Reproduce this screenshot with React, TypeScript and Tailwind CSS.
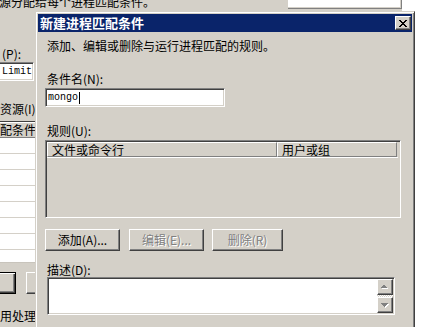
import React from "react";

const sunken =
  "border border-t-[#808080] border-l-[#808080] border-r-white border-b-white shadow-[inset_1px_1px_0_#404040,inset_-1px_-1px_0_#d4d0c8]";
const raised =
  "border border-t-white border-l-white border-r-[#404040] border-b-[#404040] shadow-[inset_-1px_-1px_0_#808080]";
const disabledText = "text-[#808080] [text-shadow:1px_1px_0_#ffffff]";

function Arrow({ up }: { up?: boolean }) {
  return (
    <svg width="8" height="5" viewBox="0 0 8 5" shapeRendering="crispEdges">
      {up ? (
        <>
          <path d="M4 1h1v1h1v1h1v1H1V3h1V2h1V1z" fill="#ffffff" />
          <path d="M3 0h1v1h1v1h1v1H0V2h1V1h1V0z" fill="#808080" />
        </>
      ) : (
        <>
          <path d="M1 1h7v1h-1v1h-1v1h-1v1H4V4H3V3H2V2H1z" fill="#ffffff" />
          <path d="M0 0h7v1H6v1H5v1H4v1H3V3H2V2H1V1H0z" fill="#808080" />
        </>
      )}
    </svg>
  );
}

function BackgroundWindow() {
  return (
    <div className="absolute left-0 top-0 w-[402px] h-[327px] bg-[#d4d0c8] flex flex-col overflow-hidden">
      <div className="flex items-start mt-[-5px] h-[14px] shrink-0">
        <span className="ml-[-13px] whitespace-nowrap">资源分配给每个进程匹配条件。</span>
        <div className="ml-auto w-[114px] h-[14px] bg-white border-r border-b border-[#808080] shadow-[inset_-1px_-1px_0_#d4d0c8]" />
      </div>
      <div className="mt-[38px] ml-[2px] h-[14px] shrink-0 whitespace-nowrap">(P):</div>
      <div
        className={`mt-[1px] ml-[-4px] w-[38px] h-[19px] shrink-0 bg-white ${sunken} p-[1px] pl-[5px] flex items-center font-['Liberation_Mono',monospace] text-[10px]`}
      >
        Limit
      </div>
      <div className="mt-[21px] h-[14px] shrink-0 whitespace-nowrap">资源(I)</div>
      <div className="mt-[5px] ml-[-20px] w-[55px] h-[142px] shrink-0 bg-white border-t border-t-[#404040] border-b border-b-[#c8c4bc] flex flex-col overflow-hidden">
        <div className="h-[16px] shrink-0 bg-[#d4d0c8] border-b border-b-[#808080] shadow-[inset_0_1px_0_#ffffff] flex items-center pl-[8px] whitespace-nowrap">
          匹配条件
        </div>
        {Array.from({ length: 8 }).map((_, i) => (
          <div key={i} className="h-[16px] shrink-0 border-b border-b-[#d4d0c8]" />
        ))}
      </div>
      <div className="mt-[9px] h-[22px] shrink-0 flex">
        <div className="ml-[-40px] w-[56px] h-[22px] border border-black shadow-[inset_1px_1px_0_#ffffff,inset_-1px_-1px_0_#404040,inset_-2px_-2px_0_#808080]" />
        <div className={`ml-[10px] w-[75px] h-[22px] ${raised}`} />
      </div>
      <div className="mt-[15px] h-[14px] shrink-0 whitespace-nowrap">用处理</div>
    </div>
  );
}

function Dialog() {
  return (
    <div className="absolute left-[35px] top-[11px] w-[380px] h-[330px] bg-[#d4d0c8] border border-t-[#d4d0c8] border-l-[#d4d0c8] border-r-[#404040] border-b-[#404040] shadow-[inset_1px_1px_0_#ffffff,inset_-1px_-1px_0_#808080] p-[2px] flex flex-col">
      <div className="h-[18px] shrink-0 bg-[#0a246a] flex items-center pl-[2px] pr-[1px]">
        <span className="text-white font-bold text-[13px] leading-[14px] whitespace-nowrap">新建进程匹配条件</span>
        <div className={`ml-auto w-[16px] h-[14px] bg-[#d4d0c8] ${raised} flex items-center justify-center`}>
          <svg width="8" height="7" viewBox="0 0 8 7" shapeRendering="crispEdges">
            <path
              d="M0 0h2v1H0z M6 0h2v1H6z M1 1h2v1H1z M5 1h2v1H5z M2 2h4v1H2z M3 3h2v1H3z M2 4h4v1H2z M1 5h2v1H1z M5 5h2v1H5z M0 6h2v1H0z M6 6h2v1H6z"
              fill="#000000"
            />
          </svg>
        </div>
      </div>

      <div className="flex flex-col pl-[7px]">
        <div className="mt-[7px] ml-[2px] h-[14px] whitespace-nowrap">添加、编辑或删除与运行进程匹配的规则。</div>

        <div className="mt-[19px] ml-[2px] h-[14px] whitespace-nowrap">条件名(N):</div>
        <div
          className={`mt-[2px] w-[180px] h-[19px] bg-white ${sunken} pl-[2px] py-[1px] pr-[1px] flex items-center font-['Liberation_Mono',monospace] text-[10px] leading-[12px]`}
        >
          <span>mongo</span>
          <span className="ml-[1px] w-[1px] h-[12px] bg-black" />
        </div>

        <div className="mt-[17px] ml-[2px] h-[14px] whitespace-nowrap">规则(U):</div>
        <div className={`mt-[2px] w-[356px] h-[78px] bg-[#d4d0c8] ${sunken} p-[1px] flex flex-col`}>
          <div className="flex h-[15px] shrink-0">
            <div className="w-[230px] h-[15px] border-t border-t-white border-l border-l-white border-r border-r-[#808080] border-b border-b-[#808080] flex items-center pl-[4px] whitespace-nowrap">
              文件或命令行
            </div>
            <div className="w-[120px] h-[15px] border-t border-t-white border-l border-l-white border-r border-r-[#808080] border-b border-b-[#808080] flex items-center pl-[4px] whitespace-nowrap">
              用户或组
            </div>
          </div>
          <div className="w-[351px] h-[1px] bg-white shrink-0" />
        </div>

        <div className="mt-[11px] h-[22px] flex">
          <div className={`w-[75px] h-[22px] ${raised} flex items-center justify-center whitespace-nowrap`}>
            添加(A)...
          </div>
          <div className={`ml-[9px] w-[75px] h-[22px] ${raised} flex items-center justify-center whitespace-nowrap ${disabledText}`}>
            编辑(E)...
          </div>
          <div className={`ml-[8px] w-[71px] h-[22px] ${raised} flex items-center justify-center whitespace-nowrap ${disabledText}`}>
            删除(R)
          </div>
        </div>

        <div className="mt-[12px] ml-[2px] h-[14px] whitespace-nowrap">描述(D):</div>
        <div className={`ml-[2px] w-[348px] h-[38px] bg-white ${sunken} p-[1px] flex justify-end`}>
          <div className="w-[16px] h-full flex flex-col">
            <div className={`h-[16px] shrink-0 bg-[#d4d0c8] ${raised} flex items-center justify-center`}>
              <Arrow up />
            </div>
            <div className="flex-1 bg-[repeating-conic-gradient(#ffffff_0_25%,#d4d0c8_0_50%)] bg-[length:2px_2px]" />
            <div className={`h-[16px] shrink-0 bg-[#d4d0c8] ${raised} flex items-center justify-center`}>
              <Arrow />
            </div>
          </div>
        </div>
      </div>
    </div>
  );
}

export default function App() {
  return (
    <div className="relative w-[432px] h-[327px] overflow-hidden bg-white font-['Noto_Sans_CJK_SC','Noto_Sans',sans-serif] text-[12px] leading-[14px] text-black">
      <BackgroundWindow />
      <Dialog />
    </div>
  );
}
